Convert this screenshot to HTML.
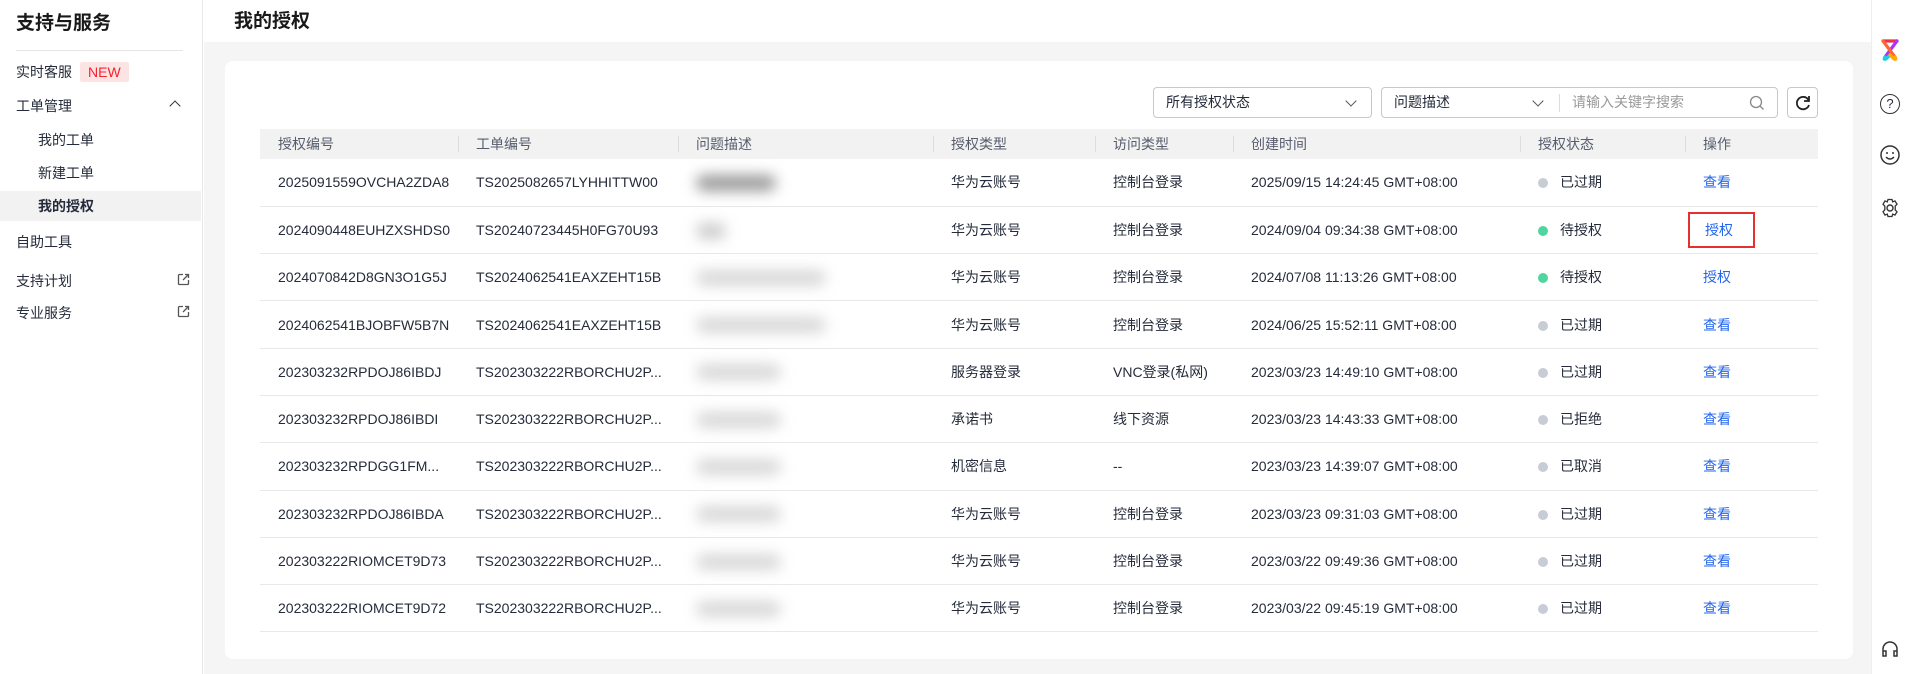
<!DOCTYPE html>
<html><head><meta charset="utf-8"><style>
*{box-sizing:border-box;margin:0;padding:0}
body{width:1905px;height:674px;overflow:hidden;background:#fff;font-family:"Liberation Sans","Noto Sans CJK SC",sans-serif;color:#252b3a;font-size:14px;position:relative}
.side{position:absolute;left:0;top:0;width:203px;height:674px;background:#fff;border-right:1px solid #e8e8e8}
.side .t{position:absolute;left:16px;top:8px;font-size:19px;font-weight:bold;color:#191919}
.side .hr{position:absolute;left:16px;top:50px;width:167px;height:1px;background:#e5e5e5}
.side .i{position:absolute;left:16px;font-size:14px;color:#252b3a}
.side .s{left:38px}
.new{display:inline-block;background:#fde4e4;color:#f5222d;font-size:14px;padding:2px 8px;margin-left:8px;border-radius:2px}
.hl{position:absolute;left:0;top:191px;width:201px;height:30px;background:#f2f2f2}
.main{position:absolute;left:204px;top:42px;width:1667px;height:632px;background:#f5f5f5}
.title{position:absolute;left:234px;top:6px;font-size:19px;font-weight:bold;color:#191919}
.card{position:absolute;left:225px;top:61px;width:1628px;height:598px;background:#fff;border-radius:8px}
.sel{position:absolute;top:87px;height:31px;border:1px solid #c8c8c8;border-radius:4px;background:#fff;font-size:14px;padding-left:12px;line-height:29px}
.chev{position:absolute;width:8px;height:8px;border-right:1.5px solid #555;border-bottom:1.5px solid #555;transform:rotate(45deg)}
.rail{position:absolute;left:1871px;top:0;width:34px;height:674px;background:#fff;border-left:1px solid #eee}
table{position:absolute;left:260px;top:129px;width:1558px;border-collapse:collapse;font-size:14px}
th{background:#f2f2f2;height:30px;text-align:left;font-weight:normal;color:#575d6c;padding-left:18px;position:relative}
th+th:before{content:"";position:absolute;left:0;top:7px;height:16px;width:1px;background:#ddd}
td{height:47.3px;border-bottom:1px solid #e8e8e8;padding-left:18px;white-space:nowrap;color:#252b3a}
.dot{display:inline-block;width:10px;height:10px;border-radius:50%;background:#c8ccd6;margin-right:12px;vertical-align:-1px}
.g{background:#50d4a0}
a{color:#2266ee;text-decoration:none}
.bl{display:inline-block;height:16px;background:#ccc;filter:blur(7px);border-radius:8px;vertical-align:middle}
</style></head><body>
<div class="side">
<div class="t">支持与服务</div><div class="hr"></div>
<div class="hl"></div>
<div class="i" style="top:62px">实时客服<span class="new">NEW</span></div>
<div class="i" style="top:96px;width:167px">工单管理<span style="position:absolute;right:4px;top:6px;width:8px;height:8px;border-left:1.5px solid #333;border-top:1.5px solid #333;transform:rotate(45deg)"></span></div>
<div class="i s" style="top:130px">我的工单</div>
<div class="i s" style="top:163px">新建工单</div>
<div class="i s" style="top:196px;font-weight:bold">我的授权</div>
<div class="i" style="top:232px">自助工具</div>
<div class="i" style="top:271px;width:174px">支持计划<svg style="position:absolute;right:0;top:2px" width="13" height="13" viewBox="0 0 13 13"><path d="M6 1.5H2.5A1 1 0 001.5 2.5v8a1 1 0 001 1h8a1 1 0 001-1V7M8 1.5h3.5V5M11.5 1.5L6 7" fill="none" stroke="#555" stroke-width="1.3"/></svg></div>
<div class="i" style="top:303px;width:174px">专业服务<svg style="position:absolute;right:0;top:2px" width="13" height="13" viewBox="0 0 13 13"><path d="M6 1.5H2.5A1 1 0 001.5 2.5v8a1 1 0 001 1h8a1 1 0 001-1V7M8 1.5h3.5V5M11.5 1.5L6 7" fill="none" stroke="#555" stroke-width="1.3"/></svg></div>
</div>
<div class="main"></div>
<div class="title">我的授权</div>
<div class="card"></div>
<div class="sel" style="left:1153px;width:219px">所有授权状态<span class="chev" style="right:16px;top:9px"></span></div>
<div class="sel" style="left:1381px;width:397px">问题描述<span class="chev" style="left:152px;top:9px"></span><span style="position:absolute;left:177px;top:6px;width:1px;height:18px;background:#ddd"></span><span style="position:absolute;left:190px;color:#999">请输入关键字搜索</span><svg style="position:absolute;right:12px;top:7px" width="16" height="16" viewBox="0 0 16 16"><circle cx="7" cy="7" r="5.5" fill="none" stroke="#888" stroke-width="1.3"/><path d="M11 11l3.5 3.5" stroke="#888" stroke-width="1.3"/></svg></div>
<div class="sel" style="left:1787px;width:31px;padding:0"><svg style="position:absolute;left:6px;top:6px" width="18" height="18" viewBox="0 0 18 18"><path d="M14.5 6A6.2 6.2 0 1 0 15 11" fill="none" stroke="#222" stroke-width="1.8"/><path d="M15 2v5h-5" fill="none" stroke="#222" stroke-width="1.8"/></svg></div>
<table>
<tr><th style="width:198px">授权编号</th><th style="width:220px">工单编号</th><th style="width:255px">问题描述</th><th style="width:162px">授权类型</th><th style="width:138px">访问类型</th><th style="width:287px">创建时间</th><th style="width:165px">授权状态</th><th>操作</th></tr>
<tr><td>2025091559OVCHA2ZDA8</td><td>TS2025082657LYHHITTW00</td><td><span class="bl" style="width:80px;background:#999"></span></td><td>华为云账号</td><td>控制台登录</td><td>2025/09/15 14:24:45 GMT+08:00</td><td><span class="dot"></span>已过期</td><td><a>查看</a></td></tr>
<tr><td>2024090448EUHZXSHDS0</td><td>TS20240723445H0FG70U93</td><td><span class="bl" style="width:30px"></span></td><td>华为云账号</td><td>控制台登录</td><td>2024/09/04 09:34:38 GMT+08:00</td><td><span class="dot g"></span>待授权</td><td><a style="display:inline-block;border:2px solid #e53030;padding:6px 20px 6px 15px;margin-left:-15px">授权</a></td></tr>
<tr><td>2024070842D8GN3O1G5J</td><td>TS2024062541EAXZEHT15B</td><td><span class="bl" style="width:130px;background:#d8d8d8"></span></td><td>华为云账号</td><td>控制台登录</td><td>2024/07/08 11:13:26 GMT+08:00</td><td><span class="dot g"></span>待授权</td><td><a>授权</a></td></tr>
<tr><td>2024062541BJOBFW5B7N</td><td>TS2024062541EAXZEHT15B</td><td><span class="bl" style="width:130px;background:#d8d8d8"></span></td><td>华为云账号</td><td>控制台登录</td><td>2024/06/25 15:52:11 GMT+08:00</td><td><span class="dot"></span>已过期</td><td><a>查看</a></td></tr>
<tr><td>202303232RPDOJ86IBDJ</td><td>TS202303222RBORCHU2P...</td><td><span class="bl" style="width:85px;background:#d8d8d8"></span></td><td>服务器登录</td><td>VNC登录(私网)</td><td>2023/03/23 14:49:10 GMT+08:00</td><td><span class="dot"></span>已过期</td><td><a>查看</a></td></tr>
<tr><td>202303232RPDOJ86IBDI</td><td>TS202303222RBORCHU2P...</td><td><span class="bl" style="width:85px;background:#d8d8d8"></span></td><td>承诺书</td><td>线下资源</td><td>2023/03/23 14:43:33 GMT+08:00</td><td><span class="dot"></span>已拒绝</td><td><a>查看</a></td></tr>
<tr><td>202303232RPDGG1FM...</td><td>TS202303222RBORCHU2P...</td><td><span class="bl" style="width:85px;background:#d8d8d8"></span></td><td>机密信息</td><td>--</td><td>2023/03/23 14:39:07 GMT+08:00</td><td><span class="dot"></span>已取消</td><td><a>查看</a></td></tr>
<tr><td>202303232RPDOJ86IBDA</td><td>TS202303222RBORCHU2P...</td><td><span class="bl" style="width:85px;background:#d8d8d8"></span></td><td>华为云账号</td><td>控制台登录</td><td>2023/03/23 09:31:03 GMT+08:00</td><td><span class="dot"></span>已过期</td><td><a>查看</a></td></tr>
<tr><td>202303222RIOMCET9D73</td><td>TS202303222RBORCHU2P...</td><td><span class="bl" style="width:85px;background:#d8d8d8"></span></td><td>华为云账号</td><td>控制台登录</td><td>2023/03/22 09:49:36 GMT+08:00</td><td><span class="dot"></span>已过期</td><td><a>查看</a></td></tr>
<tr><td>202303222RIOMCET9D72</td><td>TS202303222RBORCHU2P...</td><td><span class="bl" style="width:85px;background:#d8d8d8"></span></td><td>华为云账号</td><td>控制台登录</td><td>2023/03/22 09:45:19 GMT+08:00</td><td><span class="dot"></span>已过期</td><td><a>查看</a></td></tr>
</table>
<div class="rail">
<svg style="position:absolute;left:8px;top:38px" width="20" height="24" viewBox="0 0 20 24"><path d="M3 3H17" stroke="#e34" stroke-width="3.2" stroke-linecap="round"/><path d="M17 3L5 19" stroke="#a3f" stroke-width="3.2" stroke-linecap="round"/><path d="M3 3L15 19" stroke="#f63" stroke-width="3.2" stroke-linecap="round"/><path d="M5 19Q3 22 6 21L10 17" stroke="#2cd" stroke-width="3.2" fill="none" stroke-linecap="round"/><path d="M15 19Q17 22 14 21L10 17" stroke="#fa0" stroke-width="3.2" fill="none" stroke-linecap="round"/></svg>
<div style="position:absolute;left:8px;top:94px;width:20px;height:20px;border:1.5px solid #333;border-radius:50%;text-align:center;font-size:13px;line-height:17px">?</div>
<svg style="position:absolute;left:8px;top:145px" width="20" height="20" viewBox="0 0 20 20"><circle cx="10" cy="10" r="9" fill="none" stroke="#333" stroke-width="1.5"/><circle cx="7" cy="8" r="1" fill="#333"/><circle cx="13" cy="8" r="1" fill="#333"/><path d="M6 12Q10 16 14 12" fill="none" stroke="#333" stroke-width="1.5"/></svg>
<svg style="position:absolute;left:8px;top:198px" width="20" height="20" viewBox="0 0 20 20"><path d="M8 1.5h4l.7 2.4 2.3-1 2 3.4-1.8 1.7v4l1.8 1.7-2 3.4-2.3-1-.7 2.4H8l-.7-2.4-2.3 1-2-3.4L4.8 12V8L3 6.3l2-3.4 2.3 1z" fill="none" stroke="#333" stroke-width="1.3"/><circle cx="10" cy="10" r="3" fill="none" stroke="#333" stroke-width="1.4"/></svg>
<svg style="position:absolute;left:8px;top:640px" width="20" height="20" viewBox="0 0 20 20"><path d="M3 12V9a7 7 0 0114 0v3M3 11h3v5H3zM14 11h3v5h-3z" fill="none" stroke="#333" stroke-width="1.5"/></svg>
</div>
</body></html>
